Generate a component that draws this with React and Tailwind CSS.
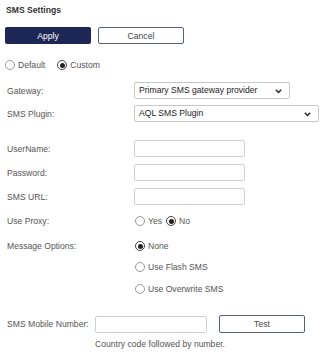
import React, { useState } from 'react';

const Radio = ({ checked, label, onClick, className = '' }) => (
  <button type="button" onClick={onClick} className={`flex items-center h-[12px] ${className}`}>
    <span
      className={`w-[10px] h-[10px] rounded-full border flex items-center justify-center bg-white ${
        checked ? 'border-[#444]' : 'border-[#999]'
      }`}
    >
      {checked && <span className="w-[5px] h-[5px] rounded-full bg-[#222]" />}
    </span>
    <span className="ml-[3px] text-[#555]">{label}</span>
  </button>
);

const Chevron = () => (
  <svg width="7" height="5" viewBox="0 0 7 5" className="absolute right-[7px] top-[6px]">
    <path d="M0.8 0.8 L3.5 3.6 L6.2 0.8" fill="none" stroke="#222" strokeWidth="1.4" />
  </svg>
);

const Select = ({ value, width }) => (
  <div className={`relative h-[17px] ${width} border border-[#c8c8c8] rounded-[2px] bg-white text-[#222] pl-[4px] leading-[15px]`}>
    {value}
    <Chevron />
  </div>
);

const Input = ({ width = 'w-[111px]' }) => (
  <input type="text" className={`h-[17px] ${width} border border-[#d0d0d0] rounded-[2px] bg-white outline-none`} />
);

const Row = ({ label, children, className = '' }) => (
  <div className={`flex items-center px-[7px] ${className}`}>
    <div className="w-[127px] text-[#555]">{label}</div>
    {children}
  </div>
);

export default function App() {
  const [mode, setMode] = useState('custom');
  const [proxy, setProxy] = useState('no');
  const [msg, setMsg] = useState('none');

  return (
    <div className="w-[326px] h-[356px] bg-white text-[8.6px] leading-[12px]" style={{ fontFamily: '"Liberation Sans", Arial, sans-serif' }}>
      <div className="pt-[5px] px-[6px] font-bold text-[#333] leading-[11px]">SMS Settings</div>

      <div className="flex gap-[7px] mt-[11px] px-[5px]">
        <button className="w-[86px] h-[17px] rounded-[2px] bg-[#1c2755] text-white">Apply</button>
        <button className="w-[86px] h-[17px] rounded-[2px] border border-[#56607a] text-[#444] bg-white">Cancel</button>
      </div>

      <div className="flex mt-[15px] px-[5px]">
        <Radio checked={mode === 'default'} label="Default" onClick={() => setMode('default')} />
        <Radio checked={mode === 'custom'} label="Custom" className="ml-[12px]" onClick={() => setMode('custom')} />
      </div>

      <Row label="Gateway:" className="mt-[11px]">
        <Select value="Primary SMS gateway provider" width="w-[156px]" />
      </Row>
      <Row label="SMS Plugin:" className="mt-[6px]">
        <Select value="AQL SMS Plugin" width="w-[185px]" />
      </Row>

      <Row label="UserName:" className="mt-[18px]">
        <Input />
      </Row>
      <Row label="Password:" className="mt-[7px]">
        <Input />
      </Row>
      <Row label="SMS URL:" className="mt-[7px]">
        <Input />
      </Row>

      <Row label="Use Proxy:" className="mt-[10px]">
        <div className="flex ml-[1px]">
          <Radio checked={proxy === 'yes'} label="Yes" onClick={() => setProxy('yes')} />
          <Radio checked={proxy === 'no'} label="No" className="ml-[4px]" onClick={() => setProxy('no')} />
        </div>
      </Row>

      <div className="flex px-[7px] mt-[13px]">
        <div className="w-[127px] text-[#555] leading-[12px]">Message Options:</div>
        <div className="flex flex-col ml-[1px]">
          <Radio checked={msg === 'none'} label="None" onClick={() => setMsg('none')} />
          <Radio checked={msg === 'flash'} label="Use Flash SMS" className="mt-[9px]" onClick={() => setMsg('flash')} />
          <Radio checked={msg === 'overwrite'} label="Use Overwrite SMS" className="mt-[10px]" onClick={() => setMsg('overwrite')} />
        </div>
      </div>

      <div className="flex items-center px-[7px] mt-[20px]">
        <div className="w-[88px] text-[#555]">SMS Mobile Number:</div>
        <Input width="w-[112px]" />
        <button className="ml-[12px] w-[86px] h-[18px] rounded-[2px] border border-[#56607a] text-[#444] bg-white">Test</button>
      </div>
      <div className="mt-[5px] pl-[95px] text-[#555]">Country code followed by number.</div>
    </div>
  );
}
